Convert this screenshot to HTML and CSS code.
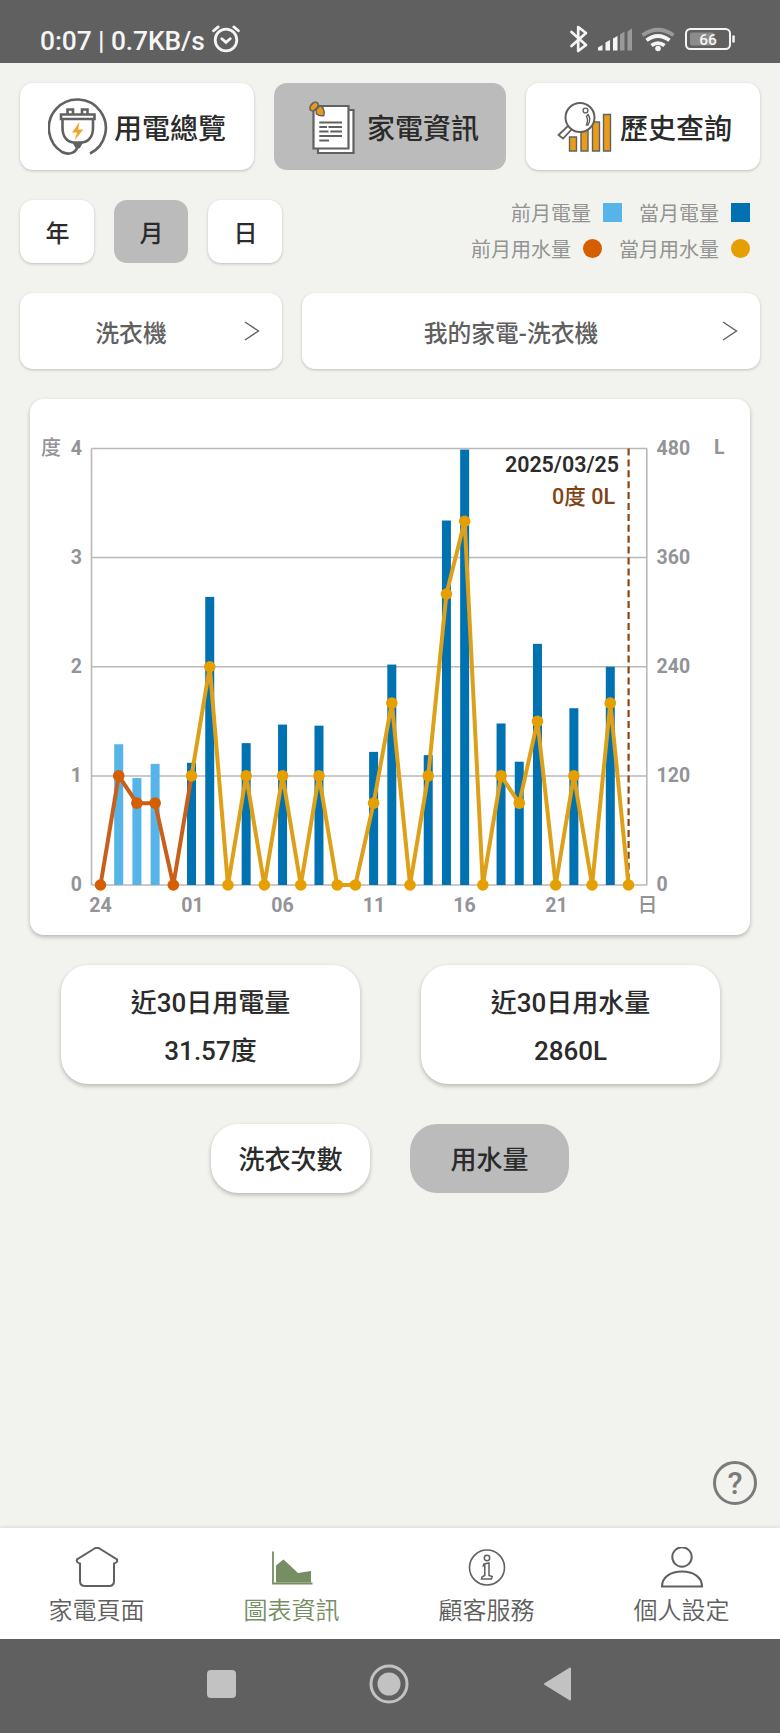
FILE: index.html
```html
<!DOCTYPE html>
<html lang="zh-Hant">

<head>
    <meta charset="UTF-8">
    <title>家電資訊</title>
    <link rel="stylesheet" href="styles.css">
</head>

<body>
    <div class="statusBar">
        <span>0:07 | 0.7KB/s</span>
        <svg class="alarm" width="28" height="28" viewBox="0 0 28 28" fill="none" stroke="#f5f5f5" stroke-width="2.8" stroke-linecap="round">
            <circle cx="14" cy="15" r="10.8" />
            <path d="M9.8 13.7l4.2 3.6 4.2-3.6M1.6 5.8l4.6-3.9M26.4 5.8l-4.6-3.9" />
        </svg>
        <svg class="statusIcons" width="168" height="30" viewBox="568 24 168 30" fill="none">
            <path d="M571.5 32l14.5 13-7.8 6V27l7.8 6-14.5 13" stroke="#f5f5f5" stroke-width="2.7" stroke-linejoin="round" stroke-linecap="round" />
            <path d="M598 50.5v-3l4.500-2.500v5.500zM605.500 50.500v-8l4.500-2.500v10.500zM613 50.500v-12l4.500-2.500v14.500z" fill="#f5f5f5" />
            <path d="M620 50.500v-16l4.500-3v19zM627.500 50.500v-19l4.500-3v22z" fill="#999" />
            <path d="M642.500 35.200q15.500-11 31 0" stroke="#999" stroke-width="3.800" />
            <path d="M646.500 40.300q11.500-8.500 23 0M651.500 45.600q6.500-5 13 0" stroke="#f5f5f5" stroke-width="3.800" />
            <circle cx="658" cy="48.500" r="2.800" fill="#f5f5f5" />
            <rect x="686" y="29" width="44" height="20" rx="4.500" stroke="#f5f5f5" stroke-width="2" />
            <rect x="690" y="32.500" width="24" height="13" rx="2" fill="#8c8c8c" />
            <path d="M733.500 36.500v5" stroke="#f5f5f5" stroke-width="2.500" stroke-linecap="round" />
            <text x="708" y="45" class="batteryText">66</text>
        </svg>
    </div>

    <div class="content">
        <div class="tabs">
            <div class="box tab">
                <svg width="60" height="60" viewBox="48 97 60 60" fill="none" stroke="#616161" stroke-width="2.600">
                    <path d="M90 153.500A28.500 28.500 0 1 0 62 152C70 156 77 152 78 145" />
                    <path d="M62.500 119v9c0 9 5 14.500 12 14.500h6.500c7 0 12-5.500 12-14.500v-9" />
                    <path d="M61 114.500h33.500v4.500H61zM67.500 114v-4.500h5.500v4.500M82 114v-4.500h5.500v4.500" />
                    <path d="M74.500 143.500h6.500l-2 3.500h-2.500z" fill="#616161" />
                    <path d="M79.500 122l-7.500 10.500h5l-2.500 8 8.700-11h-5z" fill="#efa52d" stroke="none" />
                </svg>
                <span>用電總覽</span>
            </div>
            <div class="box tab active">
                <svg width="60" height="60" viewBox="305 97 60 60" fill="none" stroke="#616161" stroke-width="2.200">
                    <path d="M318 110h35.500v43H318z" fill="#fff" />
                    <path d="M313.500 106h35v42.500h-35z" fill="#fff" />
                    <path d="M319.300 122.500H342M319.300 127h7.700M328.500 127H342M319.300 131.500h9.200M330.300 131.500H342M319.300 136H342M319.300 140.500h9.700" stroke-width="1.900" />
                    <path d="M316 110l4-4.500 3 2.500q2 4 .8 7.500-4 1-7.300-1.500z" fill="#e69a1f" stroke-width="1.500" />
                    <ellipse cx="314" cy="106.500" rx="3.200" ry="5" transform="rotate(42 314 106.500)" fill="#e69a1f" stroke-width="1.600" />
                </svg>
                <span>家電資訊</span>
            </div>
            <div class="box tab">
                <svg width="60" height="60" viewBox="555 97 60 60" fill="none" stroke="#616161" stroke-width="1.400">
                    <g fill="#e99c1b">
                        <path d="M569.500 137h7v14h-7zM581 128h7v23h-7zM592.500 122h7v29h-7zM603.500 114.500h7V151h-7z" />
                    </g>
                    <path d="M568.500 125.500l3.500 3.500-9 9.500-4.500-3.500z" fill="#fff" stroke-width="1.800" />
                    <circle cx="580" cy="117.500" r="14.500" fill="#fff" stroke-width="2" />
                    <circle cx="585.500" cy="110.500" r="2.400" />
                    <path d="M588 114.500q3.500 4.500 0 10.500h-1.500q2-5 0-8.500z" />
                </svg>
                <span>歷史查詢</span>
            </div>
        </div>

        <div class="filters">
            <div class="box period">年</div>
            <div class="box period active">月</div>
            <div class="box period">日</div>
            <div class="legend">
                <div class="legendRow">
                    <span>前月電量</span><i class="mark lightBlue"></i>
                    <span class="second">當月電量</span><i class="mark blue"></i>
                </div>
                <div class="legendRow">
                    <span>前月用水量</span><i class="mark round red"></i>
                    <span class="second">當月用水量</span><i class="mark round orange"></i>
                </div>
            </div>
        </div>

        <div class="selects">
            <div class="box select small">
                <span>洗衣機</span>
                <svg width="16" height="20" viewBox="0 0 16 20"><path d="M1 1l13.500 9L1 19" /></svg>
            </div>
            <div class="box select">
                <span>我的家電-洗衣機</span>
                <svg width="16" height="20" viewBox="0 0 16 20"><path d="M1 1l13.500 9L1 19" /></svg>
            </div>
        </div>

        <div class="chart">
            <svg width="720" height="536" viewBox="30 399 720 536">
                <path class="grid" d="M91.500 448.500H647M91.500 557.500H647M91.500 666.800H647M91.500 776H647M91.500 885H647M91.500 448.500V885M646.800 448.500V885" />
                <g id="bars"></g>
                <path d="M628.600 448.500V885" class="today" />
                <g id="lines"></g>
                <g class="axis">
                    <text x="41" y="454.500" class="unit">度</text>
                    <text x="82" y="454.500" class="end">4</text>
                    <text x="82" y="563.500" class="end">3</text>
                    <text x="82" y="672.500" class="end">2</text>
                    <text x="82" y="782" class="end">1</text>
                    <text x="82" y="891" class="end">0</text>
                    <text x="656.500" y="454.500">480</text>
                    <text x="656.500" y="563.500">360</text>
                    <text x="656.500" y="672.500">240</text>
                    <text x="656.500" y="782">120</text>
                    <text x="656.500" y="891">0</text>
                    <text x="714" y="453.500">L</text>
                    <text x="100.500" y="911.500" class="mid">24</text>
                    <text x="192.500" y="911.500" class="mid">01</text>
                    <text x="282.500" y="911.500" class="mid">06</text>
                    <text x="374" y="911.500" class="mid">11</text>
                    <text x="464.500" y="911.500" class="mid">16</text>
                    <text x="556.500" y="911.500" class="mid">21</text>
                    <text x="647.500" y="911.500" class="mid unit">日</text>
                </g>
                <text x="619" y="471.500" class="date">2025/03/25</text>
                <text x="615" y="503.500" class="usage">0度 0L</text>
            </svg>
        </div>

        <div class="totals">
            <div class="card">
                <div>近30日用電量</div>
                <div>31.57度</div>
            </div>
            <div class="card">
                <div>近30日用水量</div>
                <div>2860L</div>
            </div>
        </div>

        <div class="modes">
            <div class="mode">洗衣次數</div>
            <div class="mode active">用水量</div>
        </div>

        <div class="help">?</div>
    </div>

    <div class="menu">
        <div class="menuItem">
            <svg width="44" height="44" viewBox="0 0 44 44">
                <path d="M5 16.500v17.500q0 5 5 5h24q5 0 5-5V16.500q4-1 3-4L24.500 1.500q-2.500-1.500-5 0L2 12.500q-1 3 3 4z" stroke-width="2" />
            </svg>
            <span>家電頁面</span>
        </div>
        <div class="menuItem selected">
            <svg width="44" height="44" viewBox="0 0 44 44">
                <path d="M3 4.500v32h39.500" stroke-width="1.800" />
                <path d="M6 34.500V18.500l7.500-6L28 26l13-2v11.500H6z" class="area" />
            </svg>
            <span>圖表資訊</span>
        </div>
        <div class="menuItem">
            <svg width="44" height="44" viewBox="0 0 44 44">
                <circle cx="22" cy="20.500" r="17.500" stroke-width="1.600" />
                <circle cx="22" cy="11" r="2.700" stroke-width="1.500" />
                <path d="M19 17l5-1v12.500l3.200 1-.8 2.500H16.500l.6-2.300 2.700-1.200V18.500l-1.500.3z" stroke-width="1.500" />
            </svg>
            <span>顧客服務</span>
        </div>
        <div class="menuItem">
            <svg width="44" height="44" viewBox="0 0 44 44">
                <circle cx="22" cy="10" r="9.700" stroke-width="2" />
                <path d="M2 39.500h40C42 30 33 24.500 22 24.500S2 30 2 39.500z" stroke-width="2" />
            </svg>
            <span>個人設定</span>
        </div>
    </div>

    <div class="systemBar">
        <svg width="780" height="94" viewBox="0 0 780 94">
            <rect x="207" y="31" width="29" height="28" rx="4" />
            <circle cx="389" cy="45" r="18" class="ring" />
            <circle cx="389" cy="45" r="11.500" />
            <path d="M545 45l25-15.500v31z" stroke="#c2c2c2" stroke-width="2" stroke-linejoin="round" />
        </svg>
    </div>
    <script src="chart.js"></script>
</body>

</html>
```
FILE: styles.css
```css
* {
    box-sizing: border-box;
}

body {
    margin: 0;
    width: 780px;
    height: 1733px;
    display: flex;
    flex-direction: column;
    background-color: #f2f3ee;
    color: #2b2b2b;
    font-family: Roboto, "Noto Sans CJK TC", sans-serif;
    overflow: hidden;
}

svg {
    display: block;
    flex-shrink: 0;
}

.statusBar {
    height: 63px;
    background-color: #606060;
    color: #f5f5f5;
    font-size: 26.4px;
    font-weight: 500;
    display: flex;
    align-items: flex-start;
    padding: 25px 44px 0 40px;
    line-height: 32px;
}

.statusBar span {
    width: 166px;
    white-space: nowrap;
    letter-spacing: -0.1px;
}

.alarm {
    margin: 0 0 0 6px;
}

.statusIcons {
    margin: -1px 0 0 auto;
}

.batteryText {
    fill: #f5f5f5;
    font-size: 15.5px;
    font-weight: 500;
    text-anchor: middle;
}

.content {
    flex: 1;
    padding: 20px 20px 0;
    display: flex;
    flex-direction: column;
}

.box {
    background-color: #fff;
    border-radius: 13px;
    box-shadow: 0 1px 3px rgba(0, 0, 0, 0.22);
}

.box.active,
.mode.active {
    background-color: #bbb;
    box-shadow: none;
}

.tabs {
    display: grid;
    grid-template-columns: 234px 232px 234px;
    gap: 20px;
    height: 87px;
}

.tab {
    display: flex;
    align-items: center;
    padding-left: 28px;
    font-size: 28px;
    font-weight: 500;
}

.tab span {
    margin-left: 6px;
    padding-top: 1px;
}

.tab.active {
    padding-left: 31px;
}

.tab.active span {
    margin-left: 2px;
}

.tab:last-child {
    padding-left: 29px;
}

.tab:last-child span {
    margin-left: 5px;
}

.filters {
    display: flex;
    gap: 20px;
    height: 63px;
    margin-top: 30px;
}

.period {
    width: 74px;
    display: flex;
    align-items: center;
    justify-content: center;
    font-size: 24px;
    font-weight: 500;
    padding-left: 1px;
}

.legend {
    margin: -6px 10px 0 auto;
    color: #939393;
    font-size: 20px;
}

.legendRow {
    display: flex;
    align-items: center;
    justify-content: flex-end;
    height: 36px;
}

.legendRow .second {
    margin-left: 17px;
}

.mark {
    width: 19px;
    height: 19px;
    margin-left: 12px;
}

.round {
    border-radius: 50%;
}

.lightBlue {
    background-color: #56b4e9;
}

.blue {
    background-color: #0072b2;
}

.red {
    background-color: #d55e00;
}

.orange {
    background-color: #e69f00;
}

.selects {
    display: flex;
    gap: 20px;
    height: 76px;
    margin-top: 30px;
}

.select {
    flex: 1;
    display: flex;
    align-items: center;
    padding-right: 22px;
    font-size: 23.8px;
    font-weight: 500;
    color: #606060;
}

.select.small {
    flex: 0 0 262px;
}

.select span {
    flex: 1;
    text-align: center;
    padding: 1px 2px 0 0;
}

.select svg {
    fill: none;
    stroke: #606060;
    stroke-width: 1.4;
}

.chart {
    margin: 30px 10px 0;
    height: 536px;
    background-color: #fff;
    border-radius: 14px;
    box-shadow: 0 2px 4px rgba(0, 0, 0, 0.25);
}

.grid {
    stroke: #b9b9bb;
    stroke-width: 1.6;
    fill: none;
}

.today {
    stroke: #8b4513;
    stroke-width: 2.2;
    stroke-dasharray: 7 3.9;
}

.axis {
    fill: #939398;
    font-size: 19.5px;
    font-weight: 700;
}

.axis .unit {
    font-size: 20px;
    font-weight: 500;
}

.end,
.date,
.usage {
    text-anchor: end;
}

.mid {
    text-anchor: middle;
}

.date {
    fill: #2b2b2b;
    font-size: 21.4px;
    font-weight: 600;
}

.usage {
    fill: #7f4316;
    font-size: 21.5px;
    font-weight: 500;
}

.totals {
    display: flex;
    justify-content: space-between;
    padding: 0 40px 0 41px;
    margin-top: 30px;
}

.card {
    width: 299px;
    height: 119px;
    padding-top: 14px;
    border-radius: 27px;
    background-color: #fff;
    box-shadow: 0 2px 4px rgba(0, 0, 0, 0.25);
    text-align: center;
    font-size: 26px;
    font-weight: 500;
    line-height: 48px;
}

.modes {
    display: flex;
    justify-content: center;
    gap: 40px;
    margin-top: 40px;
}

.mode {
    width: 159px;
    height: 69px;
    line-height: 73px;
    border-radius: 27px;
    background-color: #fff;
    box-shadow: 0 2px 4px rgba(0, 0, 0, 0.25);
    text-align: center;
    font-size: 26px;
    font-weight: 500;
}

.help {
    width: 44px;
    height: 44px;
    margin: auto 3px 23px auto;
    border: 3px solid #7b7b7b;
    border-radius: 50%;
    color: #7b7b7b;
    font-size: 31px;
    font-weight: 500;
    line-height: 39px;
    text-align: center;
}

.menu {
    display: grid;
    grid-template-columns: repeat(4, 1fr);
    height: 111px;
    background-color: #fff;
    box-shadow: 0 -1px 3px rgba(0, 0, 0, 0.1);
}

.menuItem {
    display: flex;
    flex-direction: column;
    align-items: center;
    padding: 19px 2px 0 0;
    font-size: 24px;
    font-weight: 350;
    line-height: 40px;
    color: #606060;
}

.menuItem svg {
    fill: none;
    stroke: currentColor;
}

.menuItem.selected {
    color: #778d63;
}

.menuItem .area {
    fill: currentColor;
    stroke: none;
}

.systemBar {
    height: 94px;
    background-color: #606060;
}

.systemBar svg {
    fill: #c2c2c2;
}

.systemBar .ring {
    fill: none;
    stroke: #c2c2c2;
    stroke-width: 3;
}
```
FILE: chart.js
```js
var power = [0, 1.29, 0.98, 1.11, 0, 1.12, 2.64, 0, 1.3, 0, 1.47, 0, 1.46, 0, 0, 1.22, 2.02, 0, 1.19, 3.34, 3.99, 0, 1.48, 1.13, 2.21, 0, 1.62, 0, 2, 0];
var water = [0, 120, 90, 90, 0, 120, 240, 0, 120, 0, 120, 0, 120, 0, 0, 90, 200, 0, 120, 320, 400, 0, 120, 90, 180, 0, 120, 0, 200, 0];
// the first 5 days belong to last month
var lastMonth = 5;

function px(i) {
    return 100.5 + i * 18.207;
}
function py(v, max) {
    return 885 - v / max * 436.5;
}

var bars = "";
var dots = "";
var points = [];
for (var i = 0; i < 30; i++) {
    var y = py(power[i], 4);
    bars += `<rect x="${px(i) - 4.5}" y="${y}" width="9" height="${885 - y}" fill="${i < lastMonth ? "#56b4e9" : "#0072b2"}"/>`;
    points.push(px(i) + "," + py(water[i], 480));
    dots += `<circle cx="${px(i)}" cy="${py(water[i], 480)}" r="5.8" fill="${i < lastMonth ? "#d55e00" : "#e69f00"}"/>`;
}
document.getElementById("bars").innerHTML = bars;
document.getElementById("lines").innerHTML =
    `<polyline points="${points.slice(0, lastMonth + 1).join(" ")}" fill="none" stroke="#c9601a" stroke-width="4"/>
    <polyline points="${points.slice(lastMonth).join(" ")}" fill="none" stroke="#dda018" stroke-width="4" stroke-linejoin="bevel"/>` + dots;
```
